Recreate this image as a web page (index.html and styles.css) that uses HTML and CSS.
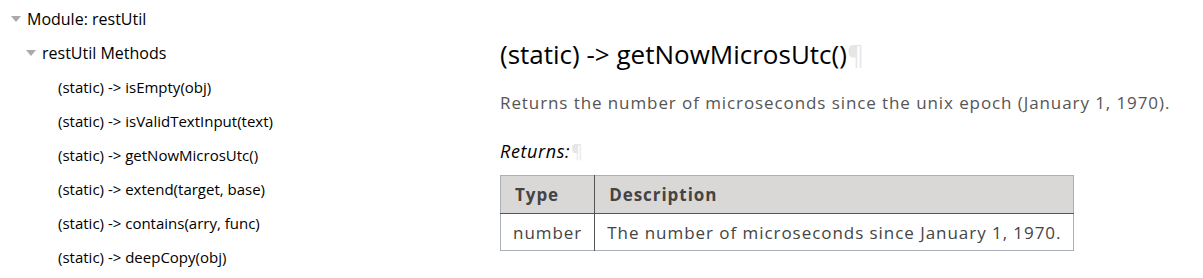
FILE: index.html
```html
<!DOCTYPE html>
<html>
<head>
<meta charset="utf-8">
<link rel="stylesheet" href="styles.css">
</head>
<body>
<div class="page">
  <nav class="nav">
    <div class="node top"><span class="tri"></span>Module: restUtil</div>
    <div class="node sub"><span class="tri"></span>restUtil Methods</div>
    <div class="node leaf">(static) -&gt; isEmpty(obj)</div>
    <div class="node leaf">(static) -&gt; isValidTextInput(text)</div>
    <div class="node leaf">(static) -&gt; getNowMicrosUtc()</div>
    <div class="node leaf">(static) -&gt; extend(target, base)</div>
    <div class="node leaf">(static) -&gt; contains(arry, func)</div>
    <div class="node leaf">(static) -&gt; deepCopy(obj)</div>
  </nav>
  <main class="content">
    <h2 class="title">(static) -&gt; getNowMicrosUtc()<span class="pil">¶</span></h2>
    <p class="desc">Returns the number of microseconds since the unix epoch (January 1, 1970).</p>
    <h5 class="returns">Returns:<span class="pil">¶</span></h5>
    <table class="params">
      <thead><tr><th class="c1">Type</th><th>Description</th></tr></thead>
      <tbody><tr><td class="c1">number</td><td>The number of microseconds since January 1, 1970.</td></tr></tbody>
    </table>
  </main>
</div>
</body>
</html>
```
FILE: styles.css
```css
html, body { margin: 0; padding: 0; background: #fff; }
body { font-family: "Open Sans", sans-serif; color: #000; }
.page { display: flex; }
.nav { width: 500px; flex: none; padding-top: 8px; }
.node { height: 34px; line-height: 22px; font-size: 15px; display: flex; align-items: flex-start; white-space: nowrap; }
.node.top { padding-left: 11px; font-size: 16px; }
.node.sub { padding-left: 26px; font-size: 16px; }
.node.leaf { padding-left: 58px; }
.tri { width: 0; height: 0; border-left: 5px solid transparent; border-right: 5px solid transparent; border-top: 6px solid #aaa; margin: 8px 6px 0 0; }
.content { flex: 1; padding-top: 37px; }
.title { font-size: 26px; font-weight: 400; margin: 0; line-height: 34px; }
.pil { color: #e6e6e6; }
.desc { font-size: 17px; color: #555; margin: 20px 0 0; line-height: 24px; letter-spacing: 0.91px; }
.returns { font-size: 18px; font-weight: 400; font-style: italic; margin: 24px 0 0; line-height: 24px; letter-spacing: 0.6px; }
.params { border-collapse: collapse; margin-top: 12px; font-size: 17px; color: #444; border: 1px solid #aab0ba; letter-spacing: 0.95px; }
.params th { background: #d9d8d7; text-align: left; font-weight: 700; padding: 0 14px; height: 37px; border-bottom: 1px solid #555; }
.params td { padding: 0 12px; height: 36px; }
.params .c1 { border-right: 1px solid #555; }
.params th.c1 { padding-left: 14px; }
```
